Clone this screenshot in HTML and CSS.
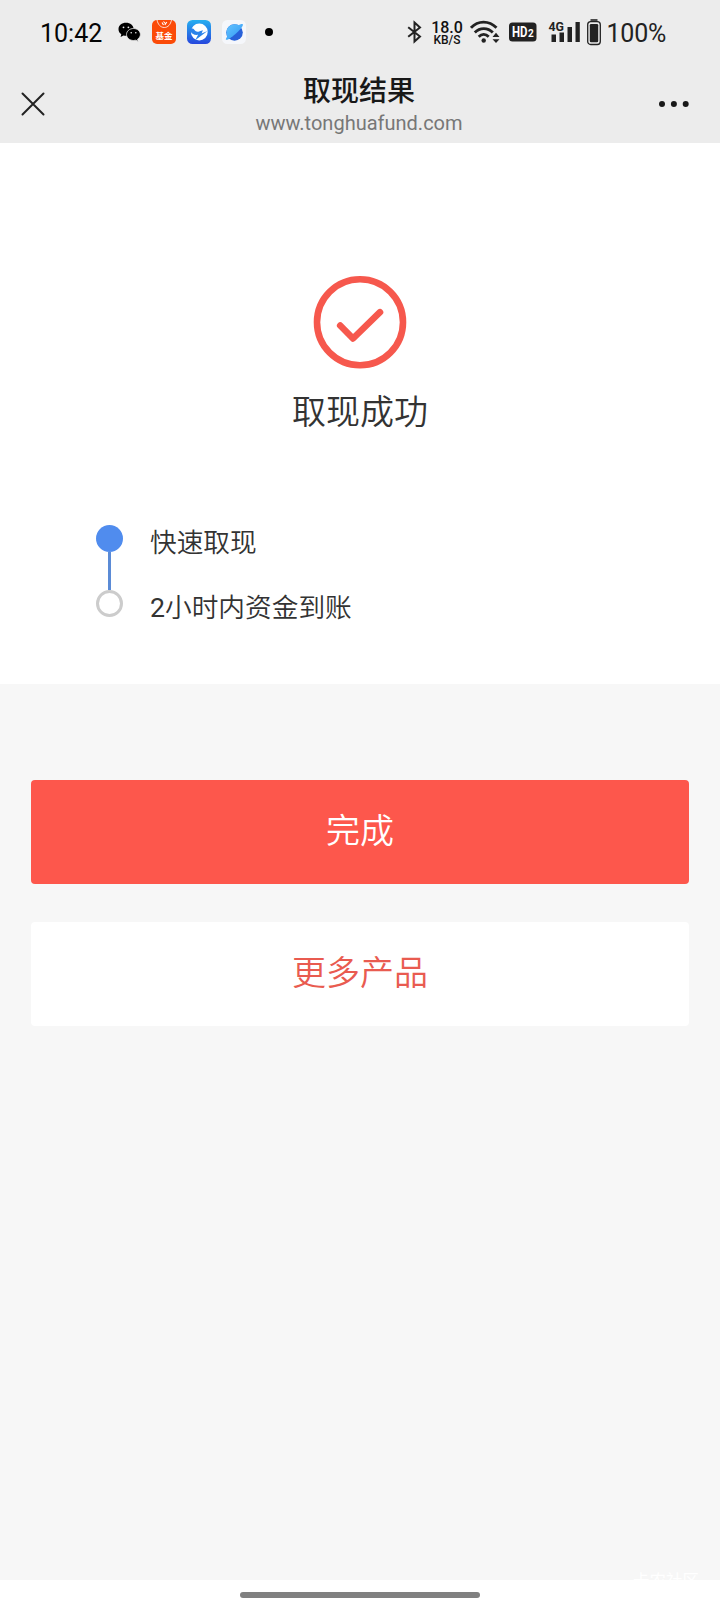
FILE: index.html
```html
<!DOCTYPE html>
<html lang="zh-CN">
<head>
<meta charset="utf-8">
<title>取现结果</title>
<link rel="stylesheet" href="styles.css">
</head>
<body>
<div class="screen">
  <header class="header">
    <div class="status">
      <div class="status-left">
        <span class="time">10:42</span>
        <svg class="wechat" width="23" height="20" viewBox="0 0 23 20">
          <path d="M8 .8C3.700.8.500 3.500.500 7.200c0 2.100 1.100 3.900 2.800 5.100L2.600 15l2.900-1.500c.8.200 1.600.3 2.500.3 4.300 0 7.600-2.900 7.600-6.600S12.300.8 8 .8z"/>
          <path class="wechat-front" d="M15.500 6.500c-3.900 0-7 2.700-7 6s3.100 6 7 6c.8 0 1.600-.1 2.300-.3l2.400 1.200-.6-2.200c1.700-1.100 2.800-2.800 2.800-4.700 0-3.300-3-6-6.900-6z"/>
          <g fill="#ececec"><circle cx="5.500" cy="5.300" r=".9"/><circle cx="10.400" cy="5.300" r=".9"/><circle cx="13.200" cy="10.800" r=".8"/><circle cx="17.800" cy="10.800" r=".8"/></g>
        </svg>
        <div class="fund-app">
          <svg width="24" height="10" viewBox="0 0 24 10" fill="none" stroke="#fff"><path d="M5 0c1 4.500 3.500 7.500 7.300 7.500S18.500 4.500 19.500 0" stroke-width=".8"/><path d="M10 2.500l1.500 2.500M14.800 2l-2 3M11.500 1.500l1.800 2" stroke-width="1.100"/></svg>
          <span>基金</span>
        </div>
        <svg class="bird" width="24" height="24" viewBox="0 0 24 24">
          <defs><linearGradient id="blue" x2="0" y2="1"><stop stop-color="#27aff0"/><stop offset="1" stop-color="#2647dd"/></linearGradient></defs>
          <rect width="24" height="24" rx="5.500" fill="url(#blue)"/>
          <circle cx="12.300" cy="12" r="8.400" fill="#fff"/>
          <path fill="#2b83ea" d="M3.500 8.300c2.300-.3 3.400.7 4.200 2 1 1.500 2.800 1.800 5 .9l3.200-.9-1.300 3.200 5.900-2.500-5.700 4.200-6.600 5 2.900-5.400c-3.500.6-6-.8-7.600-3.300z"/>
        </svg>
        <svg class="planet" width="24" height="24" viewBox="0 0 24 24">
          <defs><linearGradient id="sky" x2="1" y2="1"><stop stop-color="#65c5ff"/><stop offset="1" stop-color="#3097f3"/></linearGradient></defs>
          <rect width="24" height="24" rx="5.500" fill="#f5f7fb"/>
          <circle cx="12.500" cy="12.500" r="8.300" fill="#2861d9"/>
          <path fill="url(#sky)" d="M20.800 4.200c.8 1.500-3 6.300-7.600 10-4.100 3.500-8.500 6.500-9.300 5.400-.4-.5.300-1.800 1.400-3.200C2.800 10.500 6.200 4.600 12.300 4.200c1.700-.1 3 .3 4.200.9 2-.9 3.900-1.600 4.300-.9z"/>
        </svg>
        <span class="more-dot"></span>
      </div>
      <div class="status-right">
        <svg class="bluetooth" width="15" height="24" viewBox="0 0 15 24" fill="none" stroke="#222" stroke-width="2"><path d="M1.200 7.200 13 16.500l-5.500 5V2.500l5.500 5L1.200 16.800"/></svg>
        <div class="speed"><b>18.0</b><span>KB/S</span></div>
        <svg class="wifi" width="30" height="24" viewBox="0 0 30 24" fill="none" stroke="#222" stroke-width="2.800">
          <path d="M1 7.800C8 .2 19 .2 26.500 7.800M4.800 12.500c5-5.300 13-5.300 18 0M8.700 16.700c3.100-3 7-3 10 0"/>
          <circle cx="13.700" cy="20.500" r="2.200" fill="#222" stroke="none"/>
          <path d="m22.500 17 3.500-4.200 3.500 4.200zm0 2.300L26 23l3.500-3.700z" fill="#222" stroke="none"/>
        </svg>
        <svg class="hd" width="28" height="20" viewBox="0 0 28 20"><rect y=".5" width="27.500" height="19" rx="3.500" fill="#222"/><text x="3" y="15.300" font-size="15" textLength="15.500" lengthAdjust="spacingAndGlyphs">HD</text><text x="19" y="15.300" font-size="10">2</text></svg>
        <svg class="signal" width="32" height="24" viewBox="0 0 32 24">
          <text x="-.5" y="11" class="network" textLength="15.500" lengthAdjust="spacingAndGlyphs">4G</text>
          <path d="M2.500 14.500h4.500V22H2.500zM10.500 12.500h4.500V22h-4.500zM18.500 7H23v15h-4.500zM26.500 2h4.300v20h-4.300z" fill="#222"/>
        </svg>
        <svg class="battery" width="14" height="27" viewBox="0 0 14 27"><path d="M3.500.2h7v1.600h-7z" fill="#222"/><rect x=".7" y="2.700" width="12.600" height="22.800" rx="3" fill="none" stroke="#222" stroke-width="1.300"/><rect x="2.800" y="5" width="8.400" height="18.300" rx="1.300" fill="#222"/></svg>
        <span class="percent">100%</span>
      </div>
    </div>
    <div class="nav">
      <svg class="close" width="24" height="24" viewBox="0 0 24 24" fill="none" stroke="#222" stroke-width="2" stroke-linecap="round"><path d="m1.500 1.500 21 21m0-21-21 21"/></svg>
      <div class="heading"><h1>取现结果</h1><p>www.tonghuafund.com</p></div>
      <svg class="menu" width="30" height="8" viewBox="0 0 30 8" fill="#181818"><circle cx="3" cy="4" r="3"/><circle cx="14.900" cy="4" r="3"/><circle cx="26.700" cy="4" r="3"/></svg>
    </div>
  </header>

  <section class="result">
    <svg class="success" width="94" height="94" viewBox="0 0 94 94" fill="none" stroke="#f6584d"><circle cx="47" cy="47.300" r="43" stroke-width="6.600"/><path d="m27.200 50.500 12.800 13L67 37.200" stroke-width="6.600" stroke-linecap="round" stroke-linejoin="round"/></svg>
    <h2>取现成功</h2>
    <div class="timeline">
      <div class="track"><span class="step-done"></span><span class="step-line"></span><span class="step-next"></span></div>
      <div class="steps"><span>快速取现</span><span><b>2</b>小时内资金到账</span></div>
    </div>
  </section>

  <main class="actions">
    <button class="btn primary">完成</button>
    <button class="btn secondary">更多产品</button>
    <div class="watermark">卡农社区</div>
  </main>
  <footer class="home"><span></span></footer>
</div>
</body>
</html>
```
FILE: styles.css
```css
* { box-sizing: border-box; }
body { margin: 0; background: #fff; font-family: Roboto, "Noto Sans CJK SC", sans-serif; }
h1, h2, p { margin: 0; }
svg { display: block; flex: none; }
.screen { width: 720px; height: 1612px; display: flex; flex-direction: column; overflow: hidden; }

.header { height: 143px; background: #ececec; flex: none; }
.status { height: 64px; display: flex; justify-content: space-between; padding: 0 53.500px 0 40px; }
.status-left, .status-right { display: flex; align-items: center; height: 64px; }
.time { width: 78px; font-size: 25px; line-height: 30px; color: #050505; padding-top: 3px; }
.wechat-front { stroke: #ececec; stroke-width: .8; }
.fund-app { width: 24px; height: 24px; margin-left: 11px; border-radius: 5px; background: #fb4b08; overflow: hidden; text-align: center; }
.fund-app span { display: block; font: 700 8.500px/11px "Noto Sans CJK SC", sans-serif; color: #fff; }
.bird, .planet { margin-left: 11px; }
.more-dot { width: 8px; height: 8px; margin-left: 19px; border-radius: 50%; background: #000; }

.speed { width: 31px; margin-left: 10px; display: flex; flex-direction: column; align-items: center; color: #111; white-space: nowrap; padding-top: 2px; }
.speed b { font-size: 16px; line-height: 13px; font-weight: 500; }
.speed span { font-size: 12px; line-height: 12px; font-weight: 500; }
.wifi { margin-left: 7px; }
.hd { margin-left: 9px; font-family: Roboto, sans-serif; font-weight: 700; fill: #fff; }
.signal { margin-left: 12px; overflow: visible; }
.network { font: 700 13px Roboto, sans-serif; fill: #222; }
.battery { margin-left: 6px; }
.percent { width: 60px; margin-left: 6px; font-size: 25px; line-height: 30px; color: #222; padding-top: 3px; letter-spacing: -.2px; white-space: nowrap; }

.nav { height: 79px; display: grid; grid-template-columns: 24px 1fr 30px; padding: 0 31px 0 21px; }
.close { margin-top: 28px; }
.menu { margin-top: 36px; }
.heading { text-align: center; padding: 8px 0 0 14px; }
.heading h1 { font-size: 28px; line-height: 39px; font-weight: 500; color: #181818; }
.heading p { font-size: 20px; line-height: 24px; color: #777; }

.result { height: 541px; flex: none; background: #fff; display: flex; flex-direction: column; align-items: center; padding-top: 132px; }
.result h2 { margin-top: 18px; font-size: 34px; line-height: 50px; font-weight: 350; color: #333; }
.timeline { align-self: stretch; display: flex; gap: 27px; margin-top: 88px; padding-left: 96px; }
.track { width: 27px; display: flex; flex-direction: column; align-items: center; }
.step-done { width: 27px; height: 27px; border-radius: 50%; background: #508cee; }
.step-line { width: 3px; height: 38px; background: #5b8bd6; }
.step-next { width: 27px; height: 27px; border-radius: 50%; border: 3px solid #ccc; }
.steps { display: flex; flex-direction: column; gap: 25px; font-size: 26.700px; font-weight: 350; line-height: 40px; color: #333; margin-top: -2px; }
.steps b { font-weight: 400; }

.actions { flex: 1; background: #f7f7f7; padding: 96px 31px 0; display: flex; flex-direction: column; overflow: hidden; }
.btn { height: 104px; flex: none; border: 0; border-radius: 4px; padding: 0 0 2px; font: 350 34px/50px Roboto, "Noto Sans CJK SC", sans-serif; }
.primary { background: #fd574c; color: #fff; }
.secondary { margin-top: 38px; background: #fff; color: #e95b50; }
.watermark { align-self: flex-end; height: 10px; flex: none; margin: auto -10px 0 0; font-size: 16.500px; line-height: 24px; color: #fff; }
.home { height: 32px; flex: none; background: #fff; display: flex; justify-content: center; padding-top: 12px; }
.home span { width: 240px; height: 6px; border-radius: 3px; background: #808080; }
```
